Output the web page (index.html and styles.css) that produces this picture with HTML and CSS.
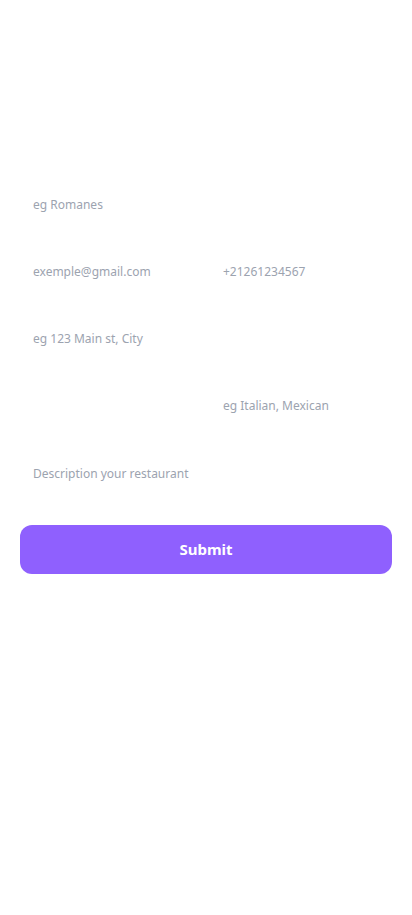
FILE: index.html
```html
<!DOCTYPE html>
<html lang="en">
<head>
<meta charset="utf-8">
<meta name="viewport" content="width=device-width, initial-scale=1">
<title>Restaurant form</title>
<link rel="stylesheet" href="styles.css">
</head>
<body>
<form class="form">
  <div class="field"><input class="input" type="text" placeholder="eg Romanes"></div>
  <div class="row">
    <div class="field"><input class="input" type="email" placeholder="exemple@gmail.com"></div>
    <div class="field"><input class="input" type="tel" placeholder="+21261234567"></div>
  </div>
  <div class="field"><input class="input" type="text" placeholder="eg 123 Main st, City"></div>
  <div class="row">
    <div class="field"><input class="input" type="text" placeholder=""></div>
    <div class="field"><input class="input" type="text" placeholder="eg Italian, Mexican"></div>
  </div>
  <div class="field"><input class="input" type="text" placeholder="Description your restaurant"></div>
  <button class="submit" type="button">Submit</button>
</form>
</body>
</html>
```
FILE: styles.css
```css
* { box-sizing: border-box; }
html, body { margin: 0; padding: 0; background: #fff; }
body { font-family: "Segoe UI", "Noto Sans", "Open Sans", sans-serif; }
.form {
  display: flex;
  flex-direction: column;
  gap: 23.3px;
  padding: 182px 20px 0;
}
.row {
  display: grid;
  grid-template-columns: 1fr 1fr;
  gap: 8px;
}
.field { height: 44px; }
.input {
  width: 100%;
  height: 44px;
  border: none;
  outline: none;
  background: transparent;
  padding: 0 13px;
  font-family: inherit;
  font-size: 12px;
  color: #374151;
}
.input::placeholder { color: #9ca3af; }
.submit {
  margin-top: 6.5px;
  height: 49px;
  width: 100%;
  border: none;
  border-radius: 12px;
  background: #8f60fe;
  color: #fff;
  font-family: inherit;
  font-weight: 700;
  font-size: 15px;
}
```
